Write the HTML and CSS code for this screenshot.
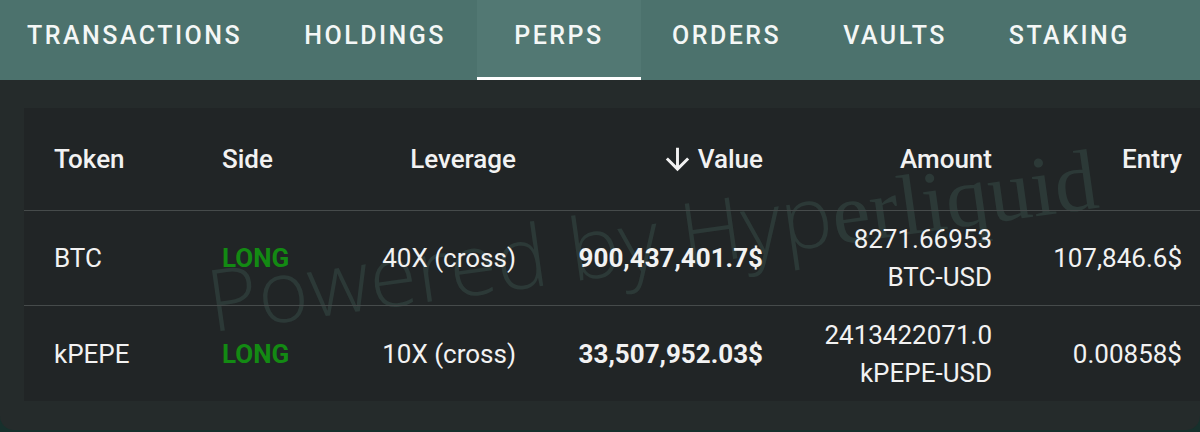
FILE: index.html
```html
<!DOCTYPE html>
<html>
<head>
<meta charset="utf-8">
<link rel="stylesheet" href="styles.css">
</head>
<body>
<div class="panel">
  <nav class="tabs">
    <div class="tab">Transactions</div>
    <div class="tab">Holdings</div>
    <div class="tab active">Perps</div>
    <div class="tab">Orders</div>
    <div class="tab">Vaults</div>
    <div class="tab">Staking</div>
  </nav>
  <div class="content">
    <div class="card">
      <div class="watermark">Powered by Hyp<span class="serif">erliquid</span></div>
      <div class="row head">
        <div class="cell left">Token</div>
        <div class="cell left">Side</div>
        <div class="cell">Leverage</div>
        <div class="cell sort"><svg class="arrow" viewBox="0 0 24 24"><path d="M20 12l-1.41-1.41L13 16.17V4h-2v12.17l-5.58-5.59L4 12l8 8 8-8z"/></svg>Value</div>
        <div class="cell">Amount</div>
        <div class="cell">Entry</div>
      </div>
      <div class="row r1">
        <div class="cell left">BTC</div>
        <div class="cell left long">LONG</div>
        <div class="cell">40X (cross)</div>
        <div class="cell bold">900,437,401.7$</div>
        <div class="cell stack"><span>8271.66953</span><span>BTC-USD</span></div>
        <div class="cell">107,846.6$</div>
      </div>
      <div class="row r2">
        <div class="cell left">kPEPE</div>
        <div class="cell left long">LONG</div>
        <div class="cell">10X (cross)</div>
        <div class="cell bold">33,507,952.03$</div>
        <div class="cell stack"><span>2413422071.0</span><span>kPEPE-USD</span></div>
        <div class="cell">0.00858$</div>
      </div>
    </div>
  </div>
</div>
</body>
</html>
```
FILE: styles.css
```css
* { box-sizing: border-box; }
html, body { margin: 0; padding: 0; }
body {
  width: 1200px;
  height: 432px;
  overflow: hidden;
  background: #17302c;
  font-family: Roboto, "Liberation Sans", sans-serif;
  color: #f2f2f2;
}
.panel {
  height: 430px;
  background: #252b2b;
  border-radius: 0 0 14px 14px;
  overflow: hidden;
}
.tabs {
  display: flex;
  height: 80px;
  background: #4c726d;
  margin-left: -4px;
}
.tab {
  display: flex;
  align-items: center;
  justify-content: center;
  min-width: 164px;
  padding: 0 31px 10px;
  font-size: 25px;
  font-weight: 500;
  letter-spacing: 2.5px;
  text-transform: uppercase;
  color: #f4f7f6;
  white-space: nowrap;
}
.tabs .tab:not(.active) { min-width: 0; }
.tab.active {
  background: #527873;
  box-shadow: inset 0 -3px 0 #ffffff;
}
.content {
  padding: 28px 0 0 24px;
}
.card {
  position: relative;
  background: #212526;
  width: 1200px;
  height: 293px;
  padding: 0 0 0 30px;
  overflow: hidden;
}
.row {
  display: grid;
  grid-template-columns: 168px 100px 194px 247px 229px 190px;
  align-items: center;
  font-size: 26px;
  position: relative;
  z-index: 1;
}
.head {
  height: 103px;
  font-weight: 500;
  border-bottom: 1px solid #464b4b;
  margin-left: -30px;
  padding-left: 30px;
}
.r1 {
  height: 95px;
  border-bottom: 1px solid #464b4b;
  margin-left: -30px;
  padding-left: 30px;
}
.r2 { height: 95px; }
.cell { text-align: right; white-space: nowrap; }
.cell.left { text-align: left; }
.long { color: #138a13; font-weight: 700; }
.bold { font-weight: 700; }
.sort {
  display: flex;
  justify-content: flex-end;
  align-items: center;
  gap: 3px;
}
.arrow { width: 35px; height: 35px; fill: #f2f2f2; }
.stack {
  display: flex;
  flex-direction: column;
  align-items: flex-end;
  line-height: 38px;
}
.watermark {
  position: absolute;
  left: 190px;
  top: 148px;
  font-size: 86px;
  font-weight: 300;
  font-family: "Open Sans", "Liberation Sans", sans-serif;
  color: rgba(92, 150, 135, 0.18);
  white-space: nowrap;
  transform: rotate(-8deg);
  transform-origin: left bottom;
  z-index: 0;
  line-height: 1;
}
.watermark .serif { font-family: "Liberation Serif", serif; }
```
